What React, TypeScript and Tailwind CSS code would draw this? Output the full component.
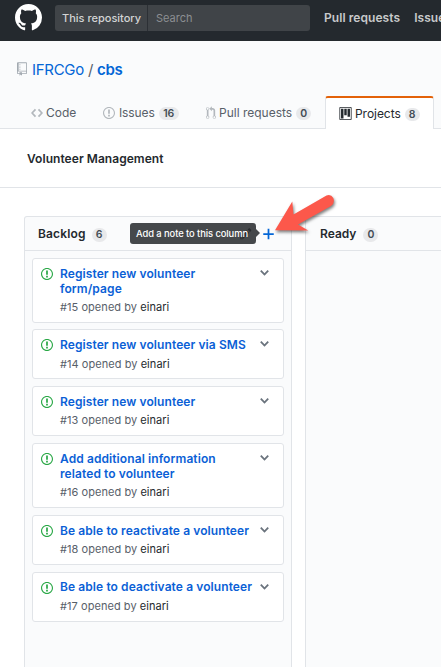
import React from "react";

const paths = {
  mark: "M8 0C3.58 0 0 3.58 0 8c0 3.54 2.29 6.53 5.47 7.59.4.07.55-.17.55-.38 0-.19-.01-.82-.01-1.49-2.01.37-2.53-.49-2.69-.94-.09-.23-.48-.94-.82-1.13-.28-.15-.68-.52-.01-.53.63-.01 1.08.58 1.23.82.72 1.21 1.87.87 2.33.66.07-.52.28-.87.51-1.07-1.78-.2-3.64-.89-3.64-3.95 0-.87.31-1.59.82-2.15-.08-.2-.36-1.02.08-2.12 0 0 .67-.21 2.2.82.64-.18 1.32-.27 2-.27.68 0 1.36.09 2 .27 1.53-1.04 2.2-.82 2.2-.82.44 1.1.16 1.92.08 2.12.51.56.82 1.27.82 2.15 0 3.07-1.87 3.75-3.65 3.95.29.25.54.73.54 1.48 0 1.07-.01 1.93-.01 2.2 0 .21.15.46.55.38A8.013 8.013 0 0 0 16 8c0-4.42-3.58-8-8-8z",
  repo: "M4 9H3V8h1v1zm0-3H3v1h1V6zm0-2H3v1h1V4zm0-2H3v1h1V2zm8-1v12c0 .55-.45 1-1 1H6v2l-1.5-1.5L3 16v-2H1c-.55 0-1-.45-1-1V1c0-.55.45-1 1-1h10c.55 0 1 .45 1 1zm-1 10H1v2h2v-1h3v1h5v-2zm0-10H2v9h9V1z",
  code: "M9.5 3L8 4.5 11.5 8 8 11.5 9.5 13 14 8 9.5 3zm-5 0L0 8l4.5 5L6 11.5 2.5 8 6 4.5 4.5 3z",
  issue: "M7 2.3c3.14 0 5.7 2.56 5.7 5.7s-2.56 5.7-5.7 5.7A5.71 5.71 0 0 1 1.3 8c0-3.14 2.56-5.7 5.7-5.7zM7 1C3.14 1 0 4.14 0 8s3.14 7 7 7 7-3.14 7-7-3.14-7-7-7zm1 3H6v5h2V4zm0 6H6v2h2v-2z",
  pull: "M11 11.28V5c-.03-.78-.34-1.47-.94-2.06C9.46 2.35 8.78 2.03 8 2H7V0L4 3l3 3V4h1c.27.02.48.11.69.31.21.2.3.42.31.69v6.28A1.993 1.993 0 0 0 10 15a1.993 1.993 0 0 0 1-3.72zm-1 2.92c-.66 0-1.2-.55-1.2-1.2 0-.65.55-1.2 1.2-1.2.65 0 1.2.55 1.2 1.2 0 .65-.55 1.2-1.2 1.2zM4 3c0-1.11-.89-2-2-2a1.993 1.993 0 0 0-1 3.72v6.56A1.993 1.993 0 0 0 2 15a1.993 1.993 0 0 0 1-3.72V4.72c.59-.34 1-.98 1-1.72zm-.8 10c0 .66-.55 1.2-1.2 1.2-.65 0-1.2-.55-1.2-1.2 0-.65.55-1.2 1.2-1.2.65 0 1.2.55 1.2 1.2zM2 4.2C1.34 4.2.8 3.65.8 3c0-.65.55-1.2 1.2-1.2.65 0 1.2.55 1.2 1.2 0 .65-.55 1.2-1.2 1.2z",
  project: "M10 12h3V2h-3v10zm-4-2h3V2H6v8zm-4 4h3V2H2v12zm-1 1h13V1H1v14zM14 0H1a1 1 0 0 0-1 1v14a1 1 0 0 0 1 1h13a1 1 0 0 0 1-1V1a1 1 0 0 0-1-1z",
  plus: "M12 9H7v5H5V9H0V7h5V2h2v5h5v2z",
  chevron: "M5 11L0 6l1.5-1.5L5 8.25 8.5 4.5 10 6l-5 5z",
  pencil: "M0 12v3h3l8-8-3-3-8 8zm3 2H1v-2h1v1h1v1zm10.3-9.3L12 6 9 3l1.3-1.3a.996.996 0 0 1 1.41 0l1.59 1.59c.39.39.39 1.02 0 1.41z",
};

function Icon({ name, box, className }: { name: keyof typeof paths; box: number; className: string }) {
  return (
    <svg viewBox={`0 0 ${box} 16`} className={`block shrink-0 ${className}`} fill="currentColor" aria-hidden="true">
      <path fillRule="evenodd" d={paths[name]} />
    </svg>
  );
}

function Counter({ children, className = "" }: { children: React.ReactNode; className?: string }) {
  return (
    <span className={`flex items-center justify-center rounded-full bg-[#e8e9eb] text-[10.5px] font-semibold text-[#444d56] ${className}`}>
      {children}
    </span>
  );
}

const cards = [
  { id: 15, title: ["Register new volunteer", "form/page"], size: "h-[65px]", titleTop: "mt-[7px]", metaTop: "mt-[4px]" },
  { id: 14, title: ["Register new volunteer via SMS"], size: "mt-[6px] h-[50px]", titleTop: "mt-[7px]", metaTop: "mt-[5px]" },
  { id: 13, title: ["Register new volunteer"], size: "mt-[7px] h-[50px]", titleTop: "mt-[7px]", metaTop: "mt-[4px]" },
  { id: 16, title: ["Add additional information", "related to volunteer"], size: "mt-[7px] h-[65px]", titleTop: "mt-[7px]", metaTop: "mt-[4px]" },
  { id: 18, title: ["Be able to reactivate a volunteer"], size: "mt-[7px] h-[50px]", titleTop: "mt-[7px]", metaTop: "mt-[4px]" },
  { id: 17, title: ["Be able to deactivate a volunteer"], size: "mt-[7px] h-[50px]", titleTop: "mt-[6px]", metaTop: "mt-[5px]" },
];

function Card({ id, title, size, titleTop, metaTop }: (typeof cards)[number]) {
  return (
    <article className={`flex shrink-0 rounded-[3px] border border-[#e1e4e8] bg-white pl-2 ${size}`}>
      <Icon name="issue" box={14} className="mt-2 h-[14px] w-3 text-[#28a745]" />
      <div className={`ml-[7px] flex-1 whitespace-nowrap ${titleTop}`}>
        <h3 className="text-[12px] font-semibold leading-[15px] tracking-[0.09px] text-[#0b5fd6]">
          {title.map((line) => (
            <span key={line} className="block">{line}</span>
          ))}
        </h3>
        <p className={`text-[11px] leading-[15px] tracking-[0.05px] text-[#586069] ${metaTop}`}>
          #{id} opened by <a className="text-[#24292e]">einari</a>
        </p>
      </div>
      <Icon name="chevron" box={10} className="mr-[14px] mt-[7px] h-[14px] w-[9px] text-[#6a737d]" />
    </article>
  );
}

export default function App() {
  return (
    <div className="relative flex h-[667px] w-[441px] flex-col overflow-hidden bg-white font-['Inter','Liberation_Sans',sans-serif] text-[#24292e]">
      <header className="flex h-[41px] shrink-0 items-start whitespace-nowrap bg-[#24292e]">
        <Icon name="mark" box={16} className="ml-[15px] mt-1 h-[27px] w-[27px] text-white" />
        <div className="ml-[13px] mt-[5px] flex h-[26px] w-[255px] shrink-0 items-center rounded-[3px] bg-[#404448]">
          <span className="flex h-full w-[93px] shrink-0 items-center border-r border-[#2c3035] pl-[7px] pt-px text-[11px] font-medium text-[#d3d4d5]">This repository</span>
          <span className="pl-[8px] pt-px text-[11px] text-[#8c8f92]">Search</span>
        </div>
        <nav className="ml-[14px] flex gap-[14px] pt-[9px] text-[12px] font-semibold leading-[18px] tracking-[0.07px] text-[#c8c9cb]">
          <a>Pull requests</a>
          <a>Issues</a>
        </nav>
      </header>

      <section className="flex h-[88px] shrink-0 flex-col border-b border-[#e1e4e8] bg-[#fafbfc] whitespace-nowrap">
        <div className="flex h-[55px] shrink-0 items-start pl-[17px] pt-[18px]">
          <Icon name="repo" box={12} className="mt-[3px] h-[14px] w-[10px] text-[#a3aab1]" />
          <h1 className="ml-[5px] flex text-[15px] leading-[22px] tracking-[-0.3px] text-[#0366d6]">
            <a>IFRCGo</a>
            <span className="mx-1 text-[#586069]">/</span>
            <a className="font-semibold">cbs</a>
          </h1>
        </div>
        <nav className="-mb-px flex h-[33px] shrink-0 text-[12px] text-[#586069]">
          <a className="flex w-[72px] items-center pl-[31px]">
            <Icon name="code" box={14} className="h-[14px] w-3 text-[#b3b8bd]" />
            <span className="ml-[3px]">Code</span>
          </a>
          <a className="ml-[31px] flex w-[103px] items-center">
            <Icon name="issue" box={14} className="h-[14px] w-3 text-[#b3b8bd]" />
            <span className="ml-1 tracking-[-0.1px]">Issues</span>
            <Counter className="ml-1 mt-0.5 h-[13px] w-[20px]">16</Counter>
          </a>
          <a className="flex w-[119px] items-center">
            <Icon name="pull" box={12} className="h-[14px] w-[10px] text-[#b3b8bd]" />
            <span className="ml-[3px]">Pull requests</span>
            <Counter className="ml-1 mt-0.5 h-[13px] w-[15px]">0</Counter>
          </a>
          <a className="flex w-[109px] items-center rounded-t-[3px] border-x border-t-2 border-x-[#e1e4e8] border-t-[#e36209] bg-white pl-[13px] text-[#24292e]">
            <Icon name="project" box={15} className="h-[13px] w-[13px]" />
            <span className="ml-[3px] tracking-[-0.05px]">Projects</span>
            <Counter className="ml-1 mt-0.5 h-[13px] w-[15px]">8</Counter>
          </a>
        </nav>
      </section>

      <section className="flex h-[59px] shrink-0 items-center border-b border-[#e1e4e8] pl-[27px] pt-px">
        <h2 className="text-[12px] font-semibold tracking-[0.05px]">Volunteer Management</h2>
      </section>

      <main className="mt-[28px] flex min-h-0 flex-1 pl-6">
        <section className="flex w-[268px] shrink-0 flex-col rounded-tl-[3px] border-x border-t border-[#e1e4e8] bg-[#fafbfc]">
          <header className="relative flex h-[34px] shrink-0 items-center border-b border-[#e1e4e8] pl-[13px]">
            <h2 className="text-[12px] font-semibold tracking-[0.15px]">Backlog</h2>
            <Counter className="ml-[6px] mt-[2px] h-[14px] w-[15px]">6</Counter>
            <Icon name="plus" box={12} className="ml-auto mr-[17px] h-[14px] w-[11px] text-[#0366d6]" />
            <div className="absolute left-[105px] top-[6px] flex h-[21px] w-[126px] items-center rounded-[3px] bg-[#45484b] pl-[6px] pt-px text-[9.4px] font-medium tracking-[-0.08px] text-white whitespace-nowrap">
              <Icon name="pencil" box={14} className="absolute right-[4px] top-[4px] h-[13px] w-[12px] text-[#292c2f]" />
              <span className="relative">Add a note to this column</span>
              <span className="absolute -right-[4px] top-[6px] border-y-[4px] border-l-[4px] border-y-transparent border-l-[#45484b]" />
            </div>
          </header>
          <div className="flex flex-col px-[7px] pt-[7px]">
            {cards.map((card) => (
              <Card key={card.id} {...card} />
            ))}
          </div>
        </section>
        <section className="ml-[13px] flex flex-1 flex-col border-l border-t border-[#e1e4e8] bg-[#fafbfc]">
          <header className="flex h-[34px] shrink-0 items-center border-b border-[#e1e4e8] pl-[14px]">
            <h2 className="text-[12px] font-semibold">Ready</h2>
            <Counter className="ml-[7px] mt-[2px] h-[14px] w-[15px]">0</Counter>
          </header>
        </section>
      </main>

      <svg viewBox="0 0 76 50" className="absolute left-[270px] top-[190px] h-[50px] w-[76px] drop-shadow-[1px_2px_1.5px_rgba(0,0,0,0.5)]" aria-hidden="true">
        <path d="M5 40.2L22.3 11.5L23.5 24.5L56.5 5.5Q61 4 63.3 8Q65.2 13 61 16L28 34.5L38.2 40.4Z" fill="#fc584b" />
      </svg>
    </div>
  );
}
